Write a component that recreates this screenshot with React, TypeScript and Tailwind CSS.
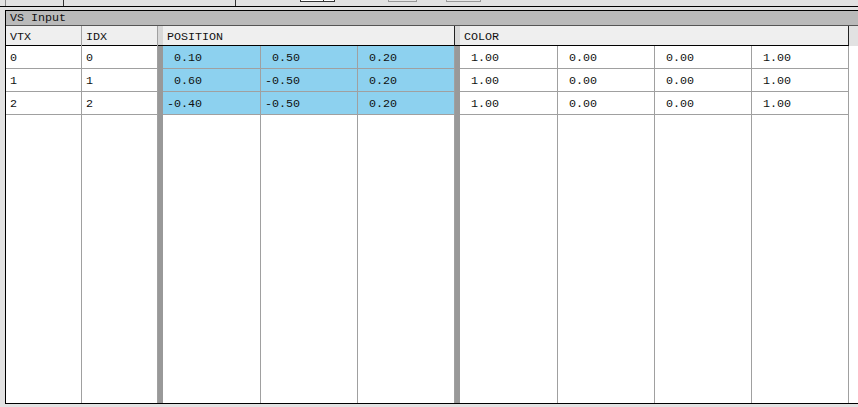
import React from 'react';

const font = { fontFamily: '"Liberation Mono", "Courier New", monospace' };

const rows = [
  { vtx: '0', idx: '0', pos: [' 0.10', ' 0.50', ' 0.20'], color: [' 1.00', ' 0.00', ' 0.00', ' 1.00'] },
  { vtx: '1', idx: '1', pos: [' 0.60', '-0.50', ' 0.20'], color: [' 1.00', ' 0.00', ' 0.00', ' 1.00'] },
  { vtx: '2', idx: '2', pos: ['-0.40', '-0.50', ' 0.20'], color: [' 1.00', ' 0.00', ' 0.00', ' 1.00'] },
];

const Cell: React.FC<{ text: string; blue?: boolean }> = ({ text, blue }) => (
  <div
    className={`h-[23px] flex items-center pl-[4px] pt-[3px] whitespace-pre border-b border-[#a0a0a0] text-[#111] ${
      blue ? 'bg-[#8dd1ef]' : 'bg-white'
    }`}
  >
    {text}
  </div>
);

const Header: React.FC<{ label?: string; dark?: boolean }> = ({ label, dark }) => (
  <div
    className={`h-[20px] shrink-0 flex items-center pl-[4px] pt-[4px] bg-[#efefef] border-b border-black text-[#111] ${
      dark ? 'border-r border-r-[#222]' : ''
    }`}
  >
    {label}
  </div>
);

const SimpleCol: React.FC<{ label: string; values: string[]; width: string }> = ({ label, values, width }) => (
  <div className={`${width} shrink-0 flex flex-col border-r border-[#a0a0a0]`}>
    <Header label={label} />
    {values.map((v, i) => (
      <Cell key={i} text={v} />
    ))}
    <div className="flex-1 bg-white" />
  </div>
);

const Separator = () => (
  <div className="w-[5px] shrink-0 flex flex-col">
    <div className="h-[20px] bg-[#d8d8d8] border-b border-black" />
    <div className="flex-1 bg-[#999999]" />
  </div>
);

const Group: React.FC<{ label: string; widths: string[]; values: string[][]; blue?: boolean }> = ({
  label,
  widths,
  values,
  blue,
}) => (
  <div className="shrink-0 flex flex-col">
    <Header label={label} dark />
    <div className="flex flex-1">
      {widths.map((w, c) => (
        <div key={c} className={`${w} flex flex-col border-r border-[#a0a0a0]`}>
          {values.map((r, i) => (
            <Cell key={i} text={r[c]} blue={blue} />
          ))}
          <div className="flex-1 bg-white" />
        </div>
      ))}
    </div>
  </div>
);

export default function App() {
  return (
    <div className="w-[858px] h-[407px] bg-[#e2e2e2] overflow-hidden flex flex-col text-[11.7px] leading-none" style={font}>
      {/* cut-off toolbar above the panel */}
      <div className="h-[7px] shrink-0 border-b border-black relative">
        <div className="absolute left-[5px] top-0 h-[6px] w-px bg-[#888]" />
        <div className="absolute left-[63px] top-0 h-[6px] w-px bg-[#333]" />
        <div className="absolute left-[235px] top-0 h-[6px] w-px bg-[#333]" />
        <div className="absolute left-[300px] top-0 h-[2px] w-[35px] bg-white border border-t-0 border-[#333] flex">
          <div className="ml-[22px] w-px bg-[#333]" />
        </div>
        <div className="absolute left-[388px] top-0 h-[2px] w-[29px] bg-[#e6e6e6] border border-t-0 border-[#999]" />
        <div className="absolute left-[446px] top-0 h-[2px] w-[35px] bg-[#e6e6e6] border border-t-0 border-[#999]" />
      </div>
      <div className="h-[3px] shrink-0" />

      <div className="ml-[5px] h-[394px] shrink-0 flex flex-col border-l border-t border-b border-black">
        <div className="h-[15px] shrink-0 flex items-center pl-[4px] pt-[2px] bg-[#bababa] border-b border-[#555] text-[#111]">
          VS Input
        </div>
        <div className="flex flex-1">
          <SimpleCol label="VTX" width="w-[76px]" values={rows.map((r) => r.vtx)} />
          <SimpleCol label="IDX" width="w-[76px]" values={rows.map((r) => r.idx)} />
          <Separator />
          <Group
            label="POSITION"
            widths={['w-[98px]', 'w-[97px]', 'w-[97px]']}
            values={rows.map((r) => r.pos)}
            blue
          />
          <Separator />
          <Group
            label="COLOR"
            widths={['w-[98px]', 'w-[97px]', 'w-[97px]', 'w-[97px]']}
            values={rows.map((r) => r.color)}
          />
          <div className="flex-1 flex flex-col">
            <div className="h-[20px] bg-[#e2e2e2]" />
            <div className="flex-1 bg-white" />
          </div>
        </div>
      </div>
    </div>
  );
}
